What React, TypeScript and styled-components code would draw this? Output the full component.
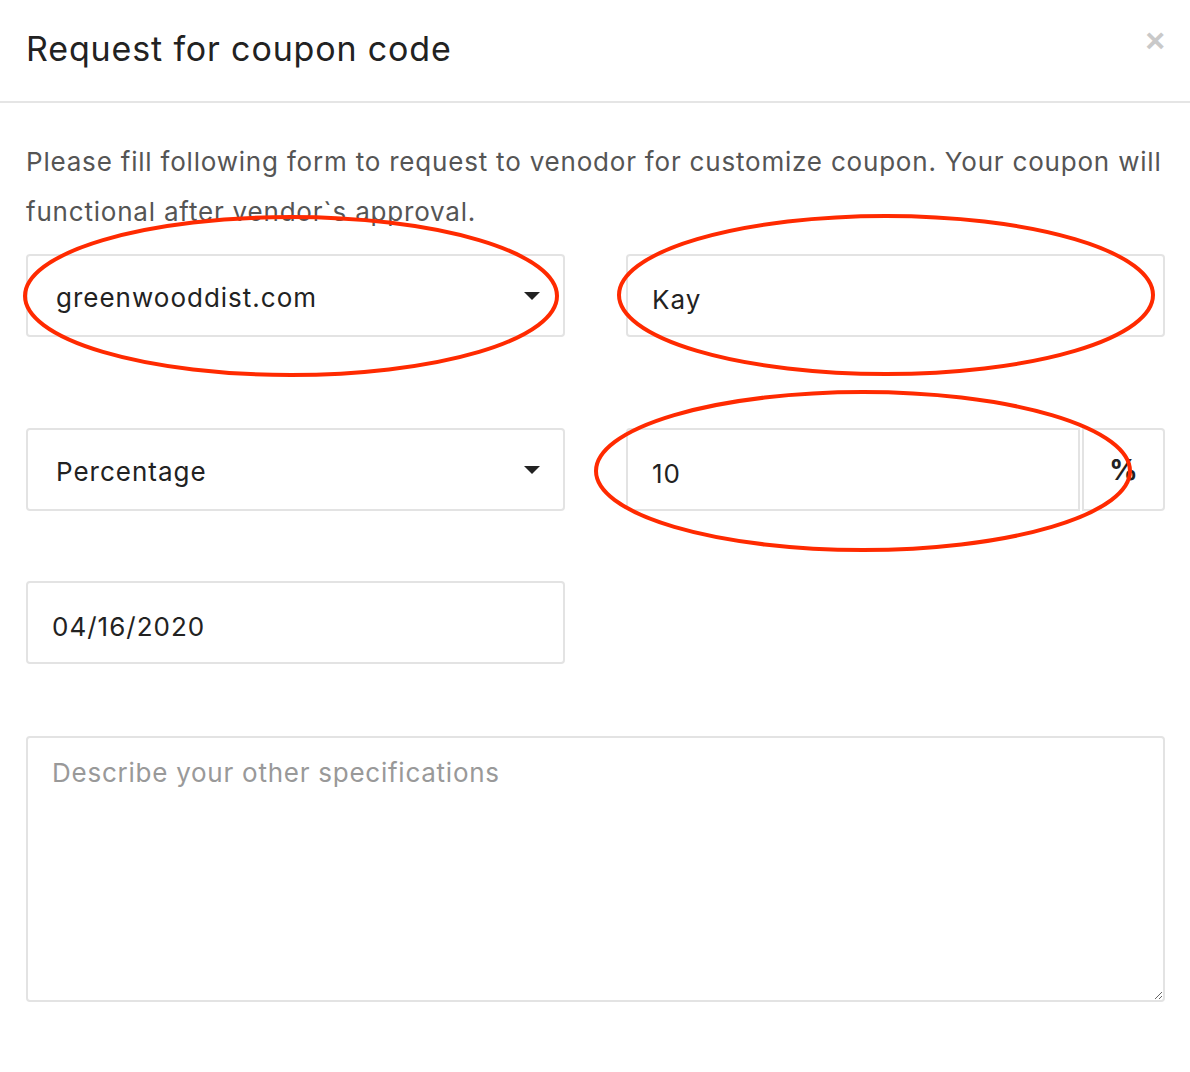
import styled, { createGlobalStyle } from "styled-components";

const GlobalStyle = createGlobalStyle`
  html, body {
    margin: 0;
    padding: 0;
    background: #ffffff;
  }
  body {
    font-family: Inter, "Noto Sans", "Liberation Sans", sans-serif;
    color: #222222;
  }
  * {
    box-sizing: border-box;
  }
`;

const App = () => {
  return (
    <Page>
      <GlobalStyle />
      <Header>
        <Title>Request for coupon code</Title>
        <CloseButton aria-label="close">×</CloseButton>
      </Header>

      <Body>
        <Intro>
          Please fill following form to request to venodor for customize coupon. Your coupon will
          <br />
          functional after vendor`s approval.
        </Intro>

        <FormGrid>
          <Field>
            <SelectBox defaultValue="greenwooddist.com">
              <option>greenwooddist.com</option>
            </SelectBox>
            <Caret />
          </Field>
          <Field>
            <TextInput defaultValue="Kay" />
          </Field>
        </FormGrid>

        <FormGrid gap={70}>
          <Field>
            <SelectBox defaultValue="Percentage">
              <option>Percentage</option>
              <option>Fixed</option>
            </SelectBox>
            <Caret />
          </Field>
          <InputGroup>
            <TextInput defaultValue="10" />
            <Addon>%</Addon>
          </InputGroup>
        </FormGrid>

        <FormGrid gap={72}>
          <Field>
            <TextInput defaultValue="04/16/2020" />
          </Field>
        </FormGrid>

        <Notes placeholder="Describe your other specifications" />
      </Body>

      <Marks viewBox="0 0 1190 1072" width="1190" height="1072">
        <ellipse cx="291" cy="296" rx="266" ry="79" />
        <ellipse cx="886" cy="295" rx="267" ry="79" />
        <ellipse cx="863" cy="471" rx="267" ry="79" />
      </Marks>
    </Page>
  );
};

const Page = styled.div`
  position: relative;
  width: 1190px;
  min-height: 1072px;
  background: #ffffff;
`;

const Header = styled.div`
  height: 103px;
  padding: 0 26px;
  border-bottom: 2px solid #e5e5e5;
  display: flex;
  align-items: center;
  justify-content: space-between;
`;

const Title = styled.h4`
  margin: 0;
  padding-bottom: 4px;
  font-size: 34px;
  font-weight: 400;
  color: #222222;
  letter-spacing: 0.85px;
`;

const CloseButton = styled.button`
  border: none;
  background: none;
  padding: 0;
  margin-top: -22px;
  margin-right: -1px;
  font-family: "Liberation Sans", sans-serif;
  font-size: 34px;
  font-weight: 700;
  line-height: 1;
  color: #c9c9c9;
  cursor: pointer;
`;

const Body = styled.div`
  padding: 34px 25px 0 26px;
`;

const Intro = styled.p`
  margin: 0 0 17px;
  font-size: 26px;
  line-height: 50px;
  color: #555555;
  letter-spacing: 0.8px;
  white-space: nowrap;
`;

const FormGrid = styled.div<{ gap?: number }>`
  display: grid;
  grid-template-columns: 539px 539px;
  column-gap: 61px;
  margin-bottom: ${({ gap }) => gap ?? 91}px;
`;

const Field = styled.div`
  position: relative;
  height: 83px;
`;

const SelectBox = styled.select`
  appearance: none;
  width: 100%;
  height: 83px;
  padding: 4px 60px 0 28px;
  border: 2px solid #e3e3e3;
  border-radius: 4px;
  background: #ffffff;
  font-family: inherit;
  font-size: 26px;
  letter-spacing: 1px;
  color: #222222;
  outline: none;
`;

const Caret = styled.span`
  position: absolute;
  right: 25px;
  top: 38px;
  width: 0;
  height: 0;
  border-left: 8px solid transparent;
  border-right: 8px solid transparent;
  border-top: 8px solid #222222;
  pointer-events: none;
`;

const TextInput = styled.input`
  width: 100%;
  height: 83px;
  padding: 7px 24px 0;
  border: 2px solid #e3e3e3;
  border-radius: 4px;
  background: #ffffff;
  font-family: inherit;
  font-size: 26px;
  letter-spacing: 1px;
  color: #222222;
  outline: none;
`;

const InputGroup = styled.div`
  display: flex;
  height: 83px;

  ${TextInput} {
    flex: 1;
    border-radius: 4px 0 0 4px;
  }
`;

const Addon = styled.span`
  width: 83px;
  margin-left: 2px;
  display: flex;
  align-items: center;
  justify-content: center;
  border: 2px solid #e3e3e3;
  border-radius: 0 4px 4px 0;
  font-size: 28px;
  font-weight: 700;
  color: #222222;
`;

const Notes = styled.textarea`
  display: block;
  width: 1139px;
  height: 266px;
  padding: 18px 24px;
  border: 2px solid #e3e3e3;
  border-radius: 4px;
  font-family: inherit;
  font-size: 26px;
  line-height: 34px;
  letter-spacing: 0.75px;
  color: #222222;
  outline: none;

  &::placeholder {
    color: #999999;
  }
`;

const Marks = styled.svg`
  position: absolute;
  left: 0;
  top: 0;
  pointer-events: none;

  ellipse {
    fill: none;
    stroke: #ff2a00;
    stroke-width: 4;
  }
`;

export default App;
